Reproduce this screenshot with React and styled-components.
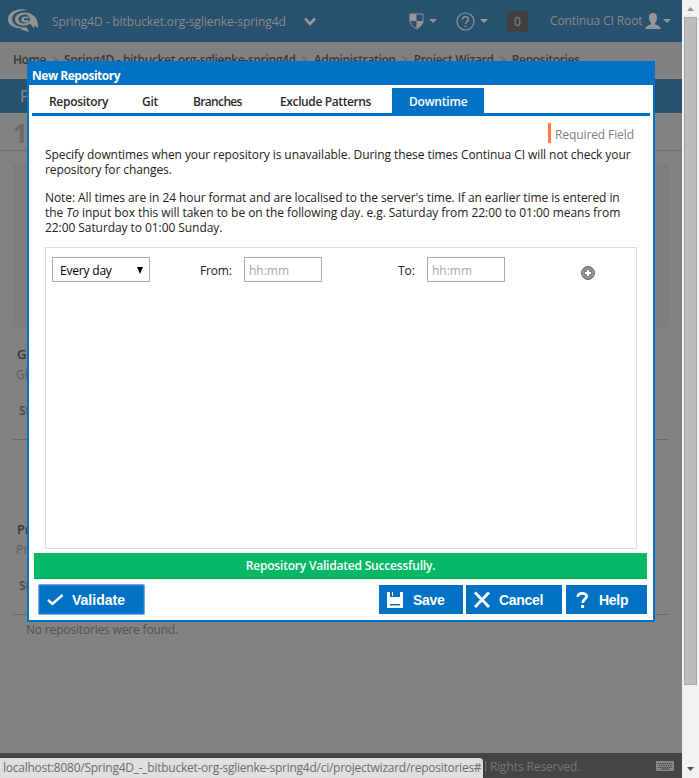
import React from "react";
import styled, { createGlobalStyle } from "styled-components";

const GlobalStyle = createGlobalStyle`
  * { box-sizing: border-box; }
  body { margin: 0; overflow: hidden; font: 12px/15px "Open Sans", "Noto Sans", sans-serif; color: #222; }
`;
const Window = styled.div`
  position: relative; display: flex; width: 699px; height: 778px; overflow: hidden; background: #f1f1f1;
`;
const Page = styled.main`
  display: flex; flex-direction: column; width: 682px; height: 778px; background: #828282;
`;
const Txt = styled.span`
  display: inline-block; white-space: pre; letter-spacing: ${(p) => p.$ls || 0}px;
`;
const Header = styled.header`
  display: flex; align-items: center; height: 42px; flex: none; background: #28506f; color: #8b8b8b;
  svg { display: block; flex: none; }
`;
const ProjectName = styled.div`
  margin-left: 13px; width: 252px;
`;
const IconGroup = styled.div`
  display: flex; align-items: center; gap: ${(p) => p.$gap || 6}px; margin-left: ${(p) => p.$left}px;
`;
const Badge = styled.div`
  width: 21px; height: 21px; margin-left: 19px; border-radius: 3px; background: #404040;
  text-align: center; line-height: 22px;
`;
const UserName = styled.div`
  width: 93px; margin-left: 22px; margin-top: -2px;
`;
const Crumbs = styled.nav`
  display: flex; height: 37px; flex: none; padding: 10px 13px 0; gap: 5.5px; color: #363636; font-weight: 600;
  background: #808080; border-bottom: 3px solid #838383;
`;
const Sep = styled.span`
  color: #5e5e5e; font-weight: 400; width: 7px;
`;
const TitleBar = styled.div`
  height: 34px; flex: none; padding: 7px 20px; background: #28506f; color: #8b8b8b; font-size: 16px; line-height: 20px;
`;
const Steps = styled.div`
  height: 38px; flex: none; padding: 5px 13px; border-bottom: 1px solid #6c6c6c; color: #6a6a6a;
  font-size: 26px; font-weight: 700; line-height: 30px;
`;
const Panel = styled.div`
  height: 163px; margin: 13px 13px 0; flex: none; background: #7d7d7d;
`;
const Section = styled.section`
  height: ${(p) => p.$h}px; margin: 0 13px; flex: none; padding: ${(p) => p.$top}px 0 0 4px; border-bottom: 1px solid #6b6b6b;
`;
const SectionTitle = styled.h2`
  margin: 0; font-size: 13px; line-height: 18px; color: #363636; font-weight: 600;
`;
const SectionNote = styled.p`
  margin: 3px 0 0 -1px; line-height: 17px; color: #5d5d5d;
`;
const SectionStatus = styled.p`
  margin: 19px 0 0 2px; line-height: 17px; color: #484848; font-weight: 600;
`;
const Empty = styled.p`
  margin: 7px 0 0 26px; color: #505050;
`;
const Footer = styled.footer`
  display: flex; align-items: center; justify-content: space-between; height: 25px; margin-top: auto;
  padding: 1px 8px 0 484px; background: #444; color: #777;
`;
const ScrollBar = styled.aside`
  display: flex; flex-direction: column; align-items: center; width: 17px; height: 778px; background: #f1f1f1;
  svg { display: block; flex: none; }
`;
const Thumb = styled.div`
  width: 13px; height: 668px; border: 1px solid #a8a8a8; background: #bcbcbc;
`;
const Dialog = styled.section`
  position: absolute; left: 27px; top: 61px; width: 628px; height: 561px;
  border: 2px solid #0072c6; background: #fff;
`;
const DialogTitle = styled.h1`
  height: 22px; margin: 0; padding: 5px 3px; background: #0072c6; color: #fff; font-size: 12px; line-height: 15px;
`;
const Tabs = styled.div`
  display: flex; height: 31px; margin: 0 3px; padding-top: 3px; border-bottom: 3px solid #0072c6;
`;
const Tab = styled.div`
  width: ${(p) => p.$w}px; height: 25px; padding: 6px 0 0 17px; font-weight: 600;
  background: ${(p) => (p.$active ? "#0072c6" : "#fff")};
  color: ${(p) => (p.$active ? "#fff" : "#2b2b2b")};
`;
const Required = styled.div`
  width: 87px; height: 20px; margin: 7px 0 0 519px; padding: 4px 0 0 4px; border-left: 3px solid #ff8040; color: #808080;
`;
const Paragraph = styled.p`
  display: flex; flex-direction: column; margin: ${(p) => p.$top}px 0 0 16px;
`;
const Schedule = styled.div`
  display: flex; align-items: flex-start; width: 592px; height: 302px; margin: 12px 0 0 16px; padding: 9px 6px; border: 1px solid #ddd;
`;
const Field = styled.div`
  display: flex; align-items: center; width: ${(p) => p.$w}px; height: 25px; padding: 1px 6px 0 ${(p) => p.$pad}px;
  justify-content: space-between; border: 1px solid #a9a9a9; color: ${(p) => p.$color};
`;
const Label = styled.label`
  width: ${(p) => p.$w}px; margin-left: ${(p) => p.$left}px; padding-top: 6px;
`;
const AddButton = styled.div`
  margin: 9px 0 0 76px;
  svg { display: block; }
`;
const Message = styled.div`
  height: 26px; margin: 4px 6px 0 5px; border-bottom: 1px solid #00a859; background: #04b866; color: #fff;
  font-weight: 600; line-height: 26px; text-align: center;
`;
const Actions = styled.div`
  display: flex; height: 29px; margin: 6px 6px 0 10px;
`;
const Button = styled.div`
  display: flex; align-items: center; width: ${(p) => p.$w}px; height: 29px; margin-left: ${(p) => p.$left || 0}px;
  padding-left: 8px; background: #0072c6; color: #fff; font: bold 14px/17px "Liberation Sans", Arial, sans-serif;
  border-radius: ${(p) => (p.$focus ? 1 : 0)}px;
  box-shadow: ${(p) => (p.$focus ? "0 0 0 1px #6ea5ee, inset 0 0 0 1px #2a79d6" : "none")};
  svg { width: 17px; height: 17px; margin-right: ${(p) => p.$gap || 9}px; flex: none; }
`;
const ButtonText = styled.span`
  padding-top: 2px; letter-spacing: ${(p) => p.$ls || 0}px;
`;
const StatusBubble = styled.div`
  position: absolute; left: 0; top: 758px; width: 483px; height: 20px; padding: 2px 0 0 3px;
  border-top-right-radius: 4px; background: #dfdfdf; color: #6c6c6c; box-shadow: 0 0 1px 1px #3b3b3b;
`;

const Logo = () => (
  <svg width="32" height="24" viewBox="0 0 32 24" fill="#929292">
    <path d="M21 1C11-1.5 1 2 1 10.5C1 16 7 19.5 14 19.5L14 20.5L22 23L20 18.5C11 18.5 5 15 5 10C5 4 12 1.5 21 1Z" />
    <path d="M18 3.5C24 3.5 31 8 31 16V19.5L28.5 16.5L26.5 19L23 14.5C19 18.5 9 17 8 11C7.5 6.5 12 3.5 18 3.5ZM18.5 5.5C13.5 5.5 11 8 11.5 11C12.5 14.5 18 15.5 21.5 13L23 11C22.5 7.5 21.5 6 18.5 5.5Z" fillRule="evenodd" />
    <path d="M22.5 8.5C18 6 13 9 14.5 11.8C15.5 14 20 14 22 12.2L20.5 11C18 12 16.8 11 17 10C17.3 9 19 8.8 20 9.5Z" />
  </svg>
);
const Caret = () => <svg width="8" height="4" fill="#969696"><path d="M0 0H8L4 4Z" /></svg>;
const Shield = () => (
  <svg width="15" height="17" viewBox="0 0 15 17">
    <path d="M1 1H14V9Q13 13 7.5 16Q2 13 1 9Z" fill="#28506f" stroke="#969696" />
    <path d="M7.5 8H14V9Q13 13 7.5 16ZM1 1H7.5V8H1Z" fill="#969696" />
  </svg>
);
const Help = () => (
  <svg width="19" height="19" fill="none" stroke="#969696">
    <circle cx="9.5" cy="9.5" r="8.5" strokeWidth="1.2" />
    <path d="M6.5 7.5C6.5 4 12.5 4 12.5 7.3C12.5 9.5 9.5 9.5 9.5 12" strokeWidth="1.5" /><path d="M9.5 13.5V15" strokeWidth="1.6" />
  </svg>
);
const User = () => (
  <svg width="16" height="16" fill="#969696"><path d="M8 0C5 0 3.8 2 4 5C4.2 7.5 5 9 6 10V11.5C3 12.3.8 13 0 16H16C15.2 13 13 12.3 10 11.5V10C11 9 11.8 7.5 12 5C12.2 2 11 0 8 0Z" /></svg>
);
const Keyboard = () => (
  <svg width="18" height="10"><path d="M0 0H18V10H0Z" fill="#858585" />
    <path d="M2 2.5H16M3 4.5H16M2 6.5H16" stroke="#444" strokeDasharray="1.4 .8" /><path d="M5 8H13" stroke="#444" />
  </svg>
);
const Add = () => (
  <svg width="14" height="14"><circle cx="7" cy="7" r="6.4" fill="#858585" stroke="#5c5c5c" /><circle cx="7" cy="7" r="5.1" fill="none" stroke="#aaa" strokeWidth=".8" /><path d="M7 4V10M4 7H10" stroke="#fff" strokeWidth="2" /></svg>
);
const Check = () => <svg viewBox="0 0 17 17"><path d="M1 9L5.5 13L15.5 4" fill="none" stroke="#fff" strokeWidth="2.4" /></svg>;
const Disk = () => <svg viewBox="0 0 17 17"><path d="M0 1H3V6H13V1H16V17H0ZM5 1H6V5H5ZM3 13V14.5H13V13Z" fill="#fff" fillRule="evenodd" /></svg>;
const Cross = () => <svg viewBox="0 0 17 17"><path d="M1 1.5L15 16M15 1.5L1 16" stroke="#fff" strokeWidth="2.8" /></svg>;
const Question = () => <svg viewBox="0 0 17 17"><path d="M3.8 5.7C4 1.4 12.7 1.4 12.7 5.3C12.7 8 8.7 8 8.7 12" fill="none" stroke="#fff" strokeWidth="2.8" /><path d="M7.1 14H10.1V17H7.1Z" fill="#fff" /></svg>;

export default function App() {
  return (
    <Window>
      <GlobalStyle />
      <Page>
        <Header>
          <IconGroup $left={7}><Logo /></IconGroup>
          <ProjectName><Txt $ls={-0.1}>Spring4D - bitbucket.org-sglienke-spring4d</Txt></ProjectName>
          <svg width="12" height="9"><path d="M1 1.5L6 7L11 1.5" fill="none" stroke="#969696" strokeWidth="2.8" /></svg>
          <IconGroup $left={93} $gap={5}><Shield /><Caret /></IconGroup>
          <IconGroup $left={19} $gap={5}><Help /><Caret /></IconGroup>
          <Badge>0</Badge>
          <UserName><Txt $ls={-0.1}>Continua CI Root</Txt></UserName>
          <IconGroup $left={2} $gap={2}><User /><Caret /></IconGroup>
        </Header>
        <Crumbs>
          <Txt $ls={-0.4}>Home</Txt><Sep>&gt;</Sep><Txt $ls={-0.34}>Spring4D - bitbucket.org-sglienke-spring4d</Txt><Sep>&gt;</Sep>
          <Txt $ls={-0.36}>Administration</Txt><Sep>&gt;</Sep><Txt $ls={-0.28}>Project Wizard</Txt><Sep>&gt;</Sep><Txt $ls={-0.33}>Repositories</Txt>
        </Crumbs>
        <TitleBar>P</TitleBar>
        <Steps>1</Steps>
        <Panel />
        <Section $h={113} $top={18}>
          <SectionTitle>Gl</SectionTitle><SectionNote>Gl</SectionNote><SectionStatus>St</SectionStatus>
        </Section>
        <Section $h={175} $top={80}>
          <SectionTitle>Pr</SectionTitle><SectionNote>Pr</SectionNote><SectionStatus>St</SectionStatus>
        </Section>
        <Empty><Txt $ls={-0.17}>No repositories were found.</Txt></Empty>
        <Footer><Txt $ls={-0.12}>l Rights Reserved.</Txt><Keyboard /></Footer>
      </Page>
      <ScrollBar>
        <svg width="17" height="17"><path d="M5 11L8.5 7L12 11Z" fill="#999" /></svg>
        <Thumb />
        <svg width="17" height="93"><path d="M5 82H12L8.5 86Z" fill="#505050" /></svg>
      </ScrollBar>

      <Dialog>
        <DialogTitle><Txt $ls={-0.48}>New Repository</Txt></DialogTitle>
        <Tabs>
          <Tab $w={93}><Txt $ls={-0.3}>Repository</Txt></Tab>
          <Tab $w={51}><Txt $ls={-0.3}>Git</Txt></Tab>
          <Tab $w={87}><Txt $ls={-0.65}>Branches</Txt></Tab>
          <Tab $w={129}><Txt $ls={-0.38}>Exclude Patterns</Txt></Tab>
          <Tab $w={92} $active><Txt $ls={-0.2}>Downtime</Txt></Tab>
        </Tabs>
        <Required><Txt $ls={-0.1}>Required Field</Txt></Required>
        <Paragraph $top={4}>
          <Txt $ls={-0.078}>Specify downtimes when your repository is unavailable. During these times Continua CI will not check your</Txt>
          <Txt $ls={-0.1}>repository for changes.</Txt>
        </Paragraph>
        <Paragraph $top={13}>
          <Txt $ls={-0.08}>Note: All times are in 24 hour format and are localised to the server's time. If an earlier time is entered in</Txt>
          <Txt $ls={-0.05}>the <i>To</i> input box this will taken to be on the following day. e.g. Saturday from 22:00 to 01:00 means from</Txt>
          <Txt $ls={-0.07}>22:00 Saturday to 01:00 Sunday.</Txt>
        </Paragraph>
        <Schedule>
          <Field $w={98} $pad={7} $color="#000"><Txt $ls={-0.2}>Every day</Txt><svg width="6" height="7"><path d="M0 0H6L3 7Z" /></svg></Field>
          <Label $left={50} $w={44}><Txt $ls={-0.2}>From:</Txt></Label>
          <Field $w={78} $pad={4} $color="#a9a9a9"><Txt>hh:mm</Txt></Field>
          <Label $left={76} $w={29}><Txt>To:</Txt></Label>
          <Field $w={78} $pad={4} $color="#a9a9a9"><Txt>hh:mm</Txt></Field>
          <AddButton><Add /></AddButton>
        </Schedule>
        <Message><Txt $ls={-0.2}>Repository Validated Successfully.</Txt></Message>
        <Actions>
          <Button $w={105} $focus $gap={8}><Check /><ButtonText>Validate</ButtonText></Button>
          <Button $w={84} $left={235}><Disk /><ButtonText $ls={-0.3}>Save</ButtonText></Button>
          <Button $w={96} $left={3} $gap={8}><Cross /><ButtonText $ls={-0.3}>Cancel</ButtonText></Button>
          <Button $w={81} $left={4} $gap={8}><Question /><ButtonText $ls={-0.3}>Help</ButtonText></Button>
        </Actions>
      </Dialog>
      <StatusBubble><Txt $ls={-0.255}>localhost:8080/Spring4D_-_bitbucket-org-sglienke-spring4d/ci/projectwizard/repositories#</Txt></StatusBubble>
    </Window>
  );
}
